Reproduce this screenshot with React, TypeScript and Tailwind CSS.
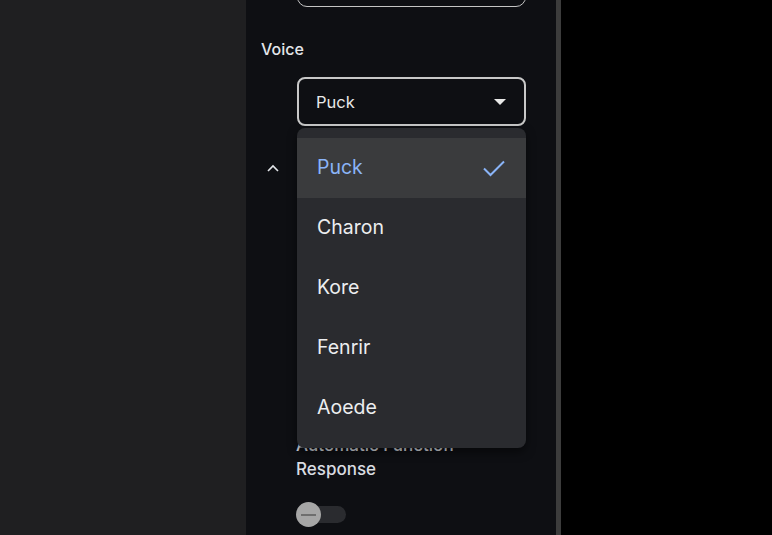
import React from "react";

export default function App() {
  const items = ["Puck", "Charon", "Kore", "Fenrir", "Aoede"];
  return (
    <div
      className="flex h-[535px] w-[772px] overflow-hidden bg-black"
      style={{ fontFamily: "Inter, 'Noto Sans', sans-serif" }}
    >
      <div className="w-[246px] shrink-0 bg-[#1f1f21]" />
      <div className="relative w-[310px] shrink-0 bg-[#0e0f13]">
        <div className="ml-[51px] mt-[-34px] h-[41px] w-[229px] rounded-[10px] border border-[#c4c4c4]" />
        <div className="ml-[15px] mt-[33px] text-[16px] font-medium leading-[18px] text-[#e3e6ea]">
          Voice
        </div>
        <div className="ml-[51px] mt-[19px] flex h-[49px] w-[229px] items-center justify-between rounded-[8px] border-2 border-[#c8c8c8] pl-[17px] pr-[18px] pt-[2px] text-[16.5px] text-[#e8e8e8]">
          <span>Puck</span>
          <svg width="12" height="7" viewBox="0 0 12 7">
            <path d="M0 0 L12 0 L6 6 Z" fill="#e8e8e8" />
          </svg>
        </div>
        <div className="ml-[21px] mt-[38px] flex items-center">
          <svg width="12" height="8" viewBox="0 0 12 8">
            <path d="M1 7 L6 2 L11 7" stroke="#e3e6ea" strokeWidth="1.6" fill="none" />
          </svg>
        </div>
        <div className="ml-[50px] mt-[261px] text-[17px] font-medium leading-[24px] text-[#d9dce1]">
          Automatic Function
          <br />
          Response
        </div>
        <div className="relative ml-[50px] mt-[21px] h-[25px] w-[51px]">
          <div className="absolute left-[1px] top-[4px] h-[17px] w-[49px] rounded-full bg-[#2a2b2f]" />
          <div className="absolute left-0 top-0 flex h-[25px] w-[25px] items-center justify-center rounded-full bg-[#a6a6a6]">
            <div className="h-[2px] w-[15px] bg-[#6e6e6e]" />
          </div>
        </div>

        <div className="absolute left-[51px] top-[128px] w-[229px] rounded-[8px] bg-[#2a2b2f] py-[10px] shadow-[0_4px_10px_rgba(0,0,0,0.5)]">
          {items.map((name, i) => (
            <div
              key={name}
              className={`flex h-[60px] items-center justify-between pl-[20px] pr-[20px] text-[19.5px] ${
                i === 0 ? "bg-[#3a3b3d] text-[#8ab4f8]" : "text-[#eceef0]"
              }`}
            >
              <span className="mt-[-1px]">{name}</span>
              {i === 0 && (
                <svg width="24" height="24" viewBox="0 0 24 24">
                  <path d="M2 12.5 L8.5 19 L22 5.5" stroke="#8ab4f8" strokeWidth="2" fill="none" />
                </svg>
              )}
            </div>
          ))}
        </div>
      </div>
      <div className="w-[5px] shrink-0 bg-[#3c3c3c]" />
      <div className="flex-1 bg-black" />
    </div>
  );
}
